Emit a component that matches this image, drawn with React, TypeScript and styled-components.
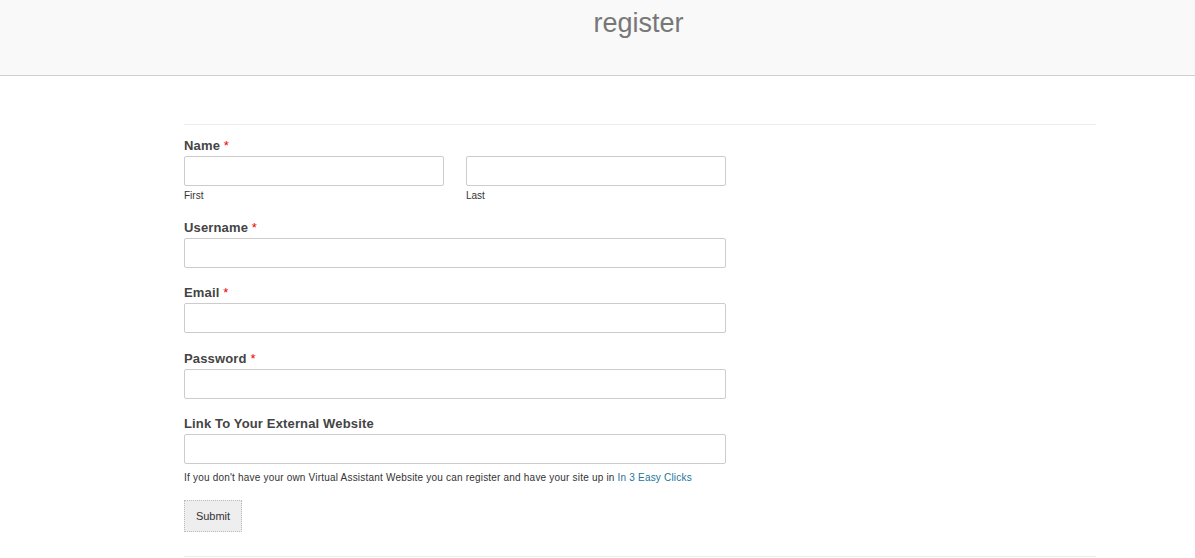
import React from 'react';
import styled, { createGlobalStyle } from 'styled-components';

const GlobalStyle = createGlobalStyle`
  body {
    margin: 0;
    background: #fff;
    font-family: "Liberation Sans", Arial, sans-serif;
  }
`;

interface FieldProps {
  label: string;
  required?: boolean;
}

function Field({ label, required, children }: React.PropsWithChildren<FieldProps>) {
  return (
    <FieldWrapper>
      <Label>
        {label}
        {required && <Star> *</Star>}
      </Label>
      {children}
    </FieldWrapper>
  );
}

export default function App() {
  return (
    <>
      <GlobalStyle />
      <Header>
        <Title>register</Title>
      </Header>
      <Content>
        <Rule />
        <Form onSubmit={(e) => e.preventDefault()}>
          <Field label="Name" required>
            <NameRow>
              <SubField>
                <Input type="text" />
                <SubLabel>First</SubLabel>
              </SubField>
              <SubField>
                <Input type="text" />
                <SubLabel>Last</SubLabel>
              </SubField>
            </NameRow>
          </Field>
          <Field label="Username" required>
            <Input type="text" />
          </Field>
          <Field label="Email" required>
            <Input type="email" />
          </Field>
          <Field label="Password" required>
            <Input type="password" />
          </Field>
          <Field label="Link To Your External Website">
            <Input type="text" />
            <Help>
              If you don't have your own Virtual Assistant Website you can register and have your site up in{' '}
              <a href="#">In 3 Easy Clicks</a>
            </Help>
          </Field>
          <SubmitButton type="submit">Submit</SubmitButton>
        </Form>
        <Rule />
      </Content>
    </>
  );
}

const Header = styled.header`
  height: 75px;
  background: #f9f9f9;
  border-bottom: 1px solid #cfcfcf;
  display: flex;
  justify-content: center;
  padding-left: 82px;
  box-sizing: content-box;
`;

const Title = styled.h1`
  margin: 7px 0 0;
  font-size: 27px;
  font-weight: 400;
  line-height: 32px;
  color: #777;
`;

const Content = styled.main`
  width: 912px;
  margin: 48px 0 0 184px;
`;

const Rule = styled.hr`
  margin: 0;
  border: none;
  border-top: 1px solid #ececec;
`;

const Form = styled.form`
  width: 542px;
  padding: 12px 0 24px;
`;

const FieldWrapper = styled.div`
  margin-bottom: 16.2px;
`;

const Label = styled.label`
  display: block;
  font-size: 13px;
  font-weight: 700;
  line-height: 18px;
  letter-spacing: 0.15px;
  color: #444;
  margin-bottom: 1px;
`;

const Star = styled.span`
  color: #e00;
  font-weight: 400;
`;

const NameRow = styled.div`
  display: grid;
  grid-template-columns: 260px 260px;
  column-gap: 22px;
`;

const SubField = styled.div`
  display: flex;
  flex-direction: column;
`;

const SubLabel = styled.span`
  font-size: 10px;
  line-height: 14px;
  margin-top: 3px;
  color: #333;
`;

const Input = styled.input`
  display: block;
  box-sizing: border-box;
  width: 100%;
  height: 30px;
  border: 1px solid #ccc;
  border-radius: 2px;
  background: #fff;
  padding: 4px 6px;
  font-size: 13px;
`;

const Help = styled.p`
  margin: 7px 0 0;
  font-size: 10px;
  line-height: 14px;
  letter-spacing: 0.2px;
  color: #333;

  a {
    color: #21759b;
    text-decoration: none;
  }
`;

const SubmitButton = styled.button`
  margin-top: -1px;
  width: 58px;
  height: 32px;
  background: #eee;
  border: 1px dotted #bbb;
  font-family: "Liberation Sans", Arial, sans-serif;
  font-size: 11px;
  color: #333;
  padding: 0;
  cursor: pointer;
`;
